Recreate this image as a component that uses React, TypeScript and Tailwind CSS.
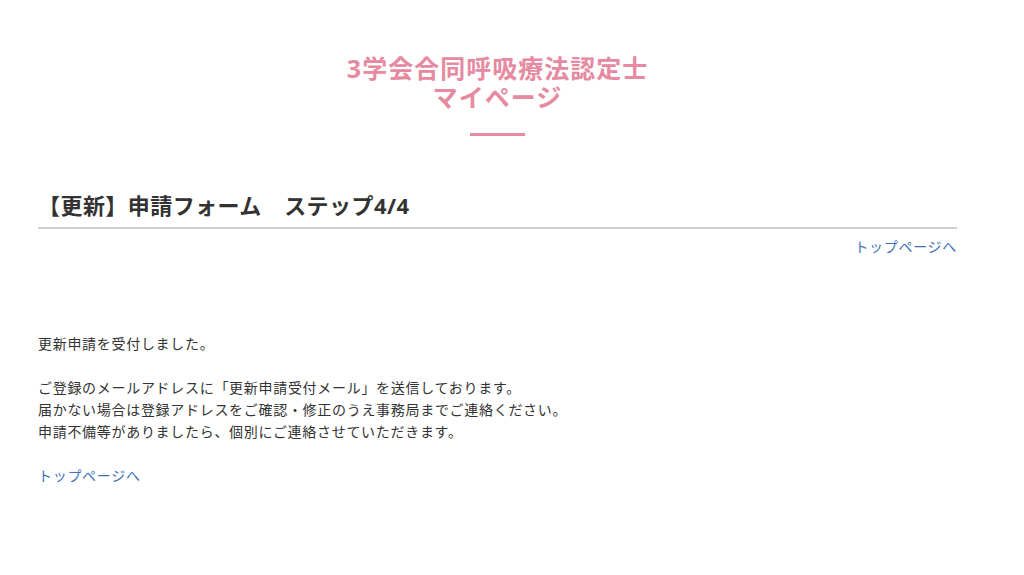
export default function App() {
  return (
    <div
      className="min-h-[575px] bg-white text-[#333]"
      style={{ fontFamily: '"Noto Sans", "Noto Sans CJK JP", sans-serif' }}
    >
      <div className="ml-[38px] w-[919px] pt-[54px]">
        <h1 className="text-center text-[25px] font-bold leading-[29px] tracking-[0.04em] text-[#e68aa2]">
          3学会合同呼吸療法認定士
          <br />
          マイページ
        </h1>
        <div className="mx-auto mt-[21px] h-[3px] w-[55px] bg-[#e68aa2]" />
        <h2 className="mt-[55px] border-b-2 border-[#cfcfcf] pb-[8px] text-[22px] font-bold leading-[28px] tracking-[0.02em] text-[#333]">
          【更新】申請フォーム　ステップ4/4
        </h2>
        <div className="mt-[7px] text-right text-[14px] leading-[22px] tracking-[0.05em]">
          <a href="#" className="text-[#3d72b8]">
            トップページへ
          </a>
        </div>
        <div className="mt-[75px] text-[14px] leading-[22px] tracking-[0.05em] text-[#333]">
          更新申請を受付しました。
          <br />
          <br />
          ご登録のメールアドレスに「更新申請受付メール」を送信しております。
          <br />
          届かない場合は登録アドレスをご確認・修正のうえ事務局までご連絡ください。
          <br />
          申請不備等がありましたら、個別にご連絡させていただきます。
          <br />
          <br />
          <a href="#" className="text-[#3d72b8]">
            トップページへ
          </a>
        </div>
      </div>
    </div>
  );
}
